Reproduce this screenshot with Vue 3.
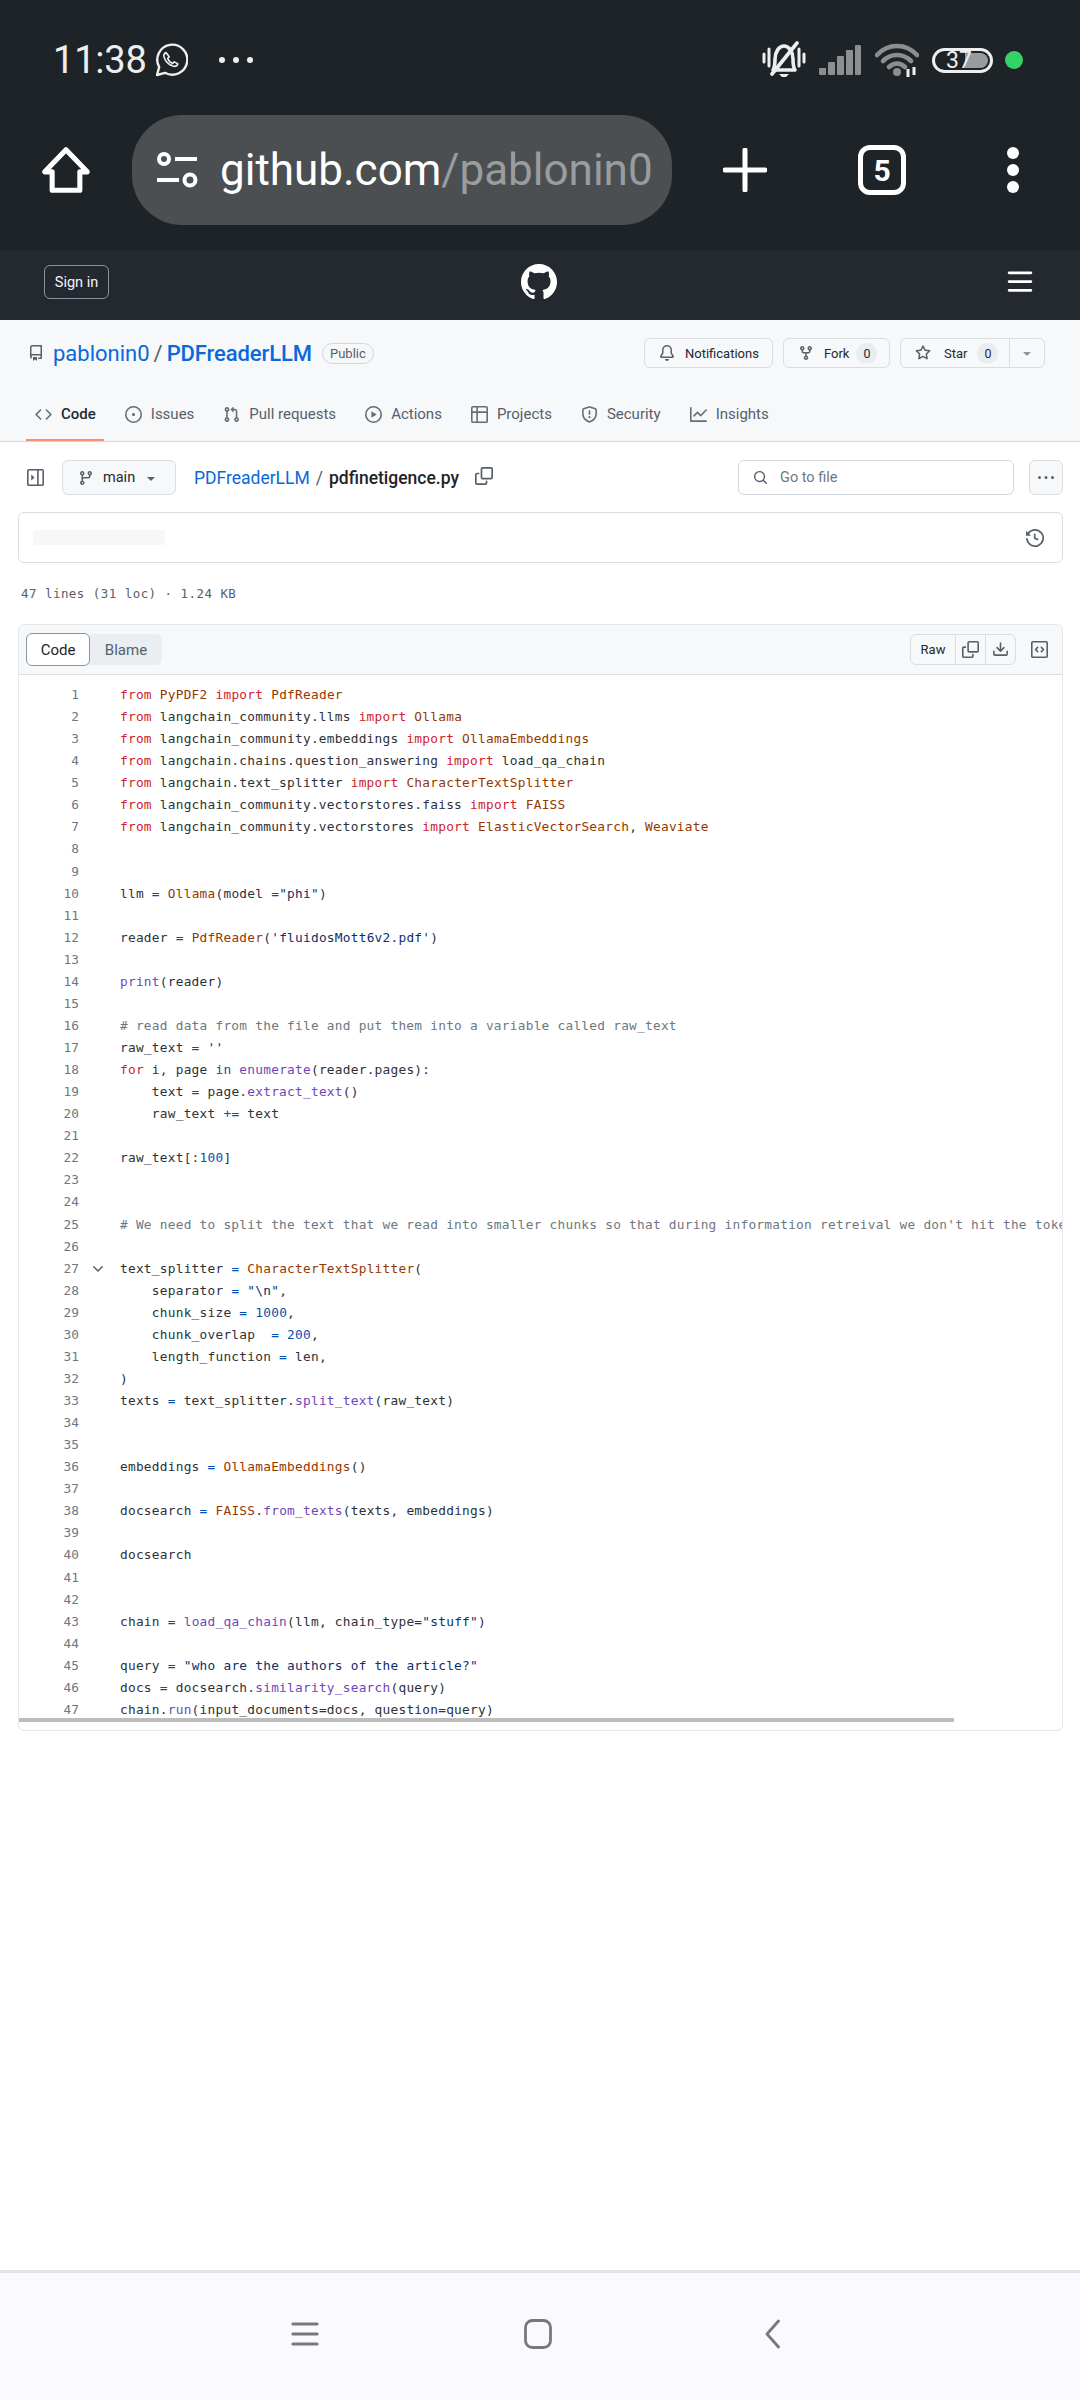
<script setup>
import { h } from 'vue'

const icons = {
  repo: 'M2 2.5A2.5 2.5 0 0 1 4.5 0h8.75a.75.75 0 0 1 .75.75v12.5a.75.75 0 0 1-.75.75h-2.5a.75.75 0 0 1 0-1.5h1.75v-2h-8a1 1 0 0 0-.714 1.7.75.75 0 1 1-1.072 1.05A2.495 2.495 0 0 1 2 11.5Zm10.5-1h-8a1 1 0 0 0-1 1v6.708A2.486 2.486 0 0 1 4.5 9h8ZM5 12.25a.25.25 0 0 1 .25-.25h3.5a.25.25 0 0 1 .25.25v3.25a.25.25 0 0 1-.4.2l-1.45-1.087a.249.249 0 0 0-.3 0L5.4 15.7a.25.25 0 0 1-.4-.2Z',
  bell: 'M8 16a2 2 0 0 0 1.985-1.75c.017-.137-.097-.25-.235-.25h-3.5c-.138 0-.252.113-.235.25A2 2 0 0 0 8 16ZM3 5a5 5 0 0 1 10 0v2.947c0 .05.015.098.042.139l1.703 2.555A1.519 1.519 0 0 1 13.482 13H2.518a1.516 1.516 0 0 1-1.263-2.36l1.703-2.554A.255.255 0 0 0 3 7.947Zm5-3.5A3.5 3.5 0 0 0 4.5 5v2.947c0 .346-.102.683-.294.97l-1.703 2.556a.017.017 0 0 0-.003.01l.001.006c0 .002.002.004.004.006l.006.004.007.001h10.964l.007-.001.006-.004.004-.006.001-.007a.017.017 0 0 0-.003-.01l-1.703-2.554a1.745 1.745 0 0 1-.294-.97V5A3.5 3.5 0 0 0 8 1.5Z',
  fork: 'M5 5.372v.878c0 .414.336.75.75.75h4.5a.75.75 0 0 0 .75-.75v-.878a2.25 2.25 0 1 1 1.5 0v.878a2.25 2.25 0 0 1-2.25 2.25h-1.5v2.128a2.251 2.251 0 1 1-1.5 0V8.5h-1.5A2.25 2.25 0 0 1 3.5 6.25v-.878a2.25 2.25 0 1 1 1.5 0ZM5 3.25a.75.75 0 1 0-1.5 0 .75.75 0 0 0 1.5 0Zm6.75.75a.75.75 0 1 0 0-1.5.75.75 0 0 0 0 1.5Zm-3 8.75a.75.75 0 1 0-1.5 0 .75.75 0 0 0 1.5 0Z',
  star: 'M8 .25a.75.75 0 0 1 .673.418l1.882 3.815 4.21.612a.75.75 0 0 1 .416 1.279l-3.046 2.97.719 4.192a.751.751 0 0 1-1.088.791L8 12.347l-3.766 1.98a.75.75 0 0 1-1.088-.79l.72-4.194L.818 6.374a.75.75 0 0 1 .416-1.28l4.21-.611L7.327.668A.75.75 0 0 1 8 .25Zm0 2.445L6.615 5.5a.75.75 0 0 1-.564.41l-3.097.45 2.24 2.184a.75.75 0 0 1 .216.664l-.528 3.084 2.769-1.456a.75.75 0 0 1 .698 0l2.77 1.456-.53-3.084a.75.75 0 0 1 .216-.664l2.24-2.183-3.096-.45a.75.75 0 0 1-.564-.41L8 2.694Z',
  code: 'm11.28 3.22 4.25 4.25a.75.75 0 0 1 0 1.06l-4.25 4.25a.749.749 0 0 1-1.275-.326.749.749 0 0 1 .215-.734L13.94 8l-3.72-3.72a.749.749 0 0 1 .326-1.275.749.749 0 0 1 .734.215Zm-6.56 0a.751.751 0 0 1 1.042.018.751.751 0 0 1 .018 1.042L2.06 8l3.72 3.72a.749.749 0 0 1-.326 1.275.749.749 0 0 1-.734-.215L.47 8.53a.75.75 0 0 1 0-1.06Z',
  issue: 'M8 9.5a1.5 1.5 0 1 0 0-3 1.5 1.5 0 0 0 0 3ZM8 0a8 8 0 1 1 0 16A8 8 0 0 1 8 0ZM1.5 8a6.5 6.5 0 1 0 13 0 6.5 6.5 0 0 0-13 0Z',
  pr: 'M1.5 3.25a2.25 2.25 0 1 1 3 2.122v5.256a2.251 2.251 0 1 1-1.5 0V5.372A2.25 2.25 0 0 1 1.5 3.25Zm5.677-.177L9.573.677A.25.25 0 0 1 10 .854V2.5h1A2.5 2.5 0 0 1 13.5 5v5.628a2.251 2.251 0 1 1-1.5 0V5a1 1 0 0 0-1-1h-1v1.646a.25.25 0 0 1-.427.177L7.177 3.427a.25.25 0 0 1 0-.354ZM3.75 2.5a.75.75 0 1 0 0 1.5.75.75 0 0 0 0-1.5Zm0 9.5a.75.75 0 1 0 0 1.5.75.75 0 0 0 0-1.5Zm8.25.75a.75.75 0 1 0 1.5 0 .75.75 0 0 0-1.5 0Z',
  play: 'M8 0a8 8 0 1 1 0 16A8 8 0 0 1 8 0ZM1.5 8a6.5 6.5 0 1 0 13 0 6.5 6.5 0 0 0-13 0Zm4.879-2.773 4.264 2.559a.25.25 0 0 1 0 .428l-4.264 2.559A.25.25 0 0 1 6 10.559V5.442a.25.25 0 0 1 .379-.215Z',
  table: 'M0 1.75C0 .784.784 0 1.75 0h12.5C15.216 0 16 .784 16 1.75v12.5A1.75 1.75 0 0 1 14.25 16H1.75A1.75 1.75 0 0 1 0 14.25ZM6.5 6.5v8h7.75a.25.25 0 0 0 .25-.25V6.5Zm8-1.5V1.75a.25.25 0 0 0-.25-.25H6.5V5Zm-13 1.5v7.75c0 .138.112.25.25.25H5v-8ZM5 5V1.5H1.75a.25.25 0 0 0-.25.25V5Z',
  shield: 'M7.467.133a1.748 1.748 0 0 1 1.066 0l5.25 1.68A1.75 1.75 0 0 1 15 3.48V7c0 1.566-.32 3.182-1.303 4.682-.983 1.498-2.585 2.813-5.032 3.855a1.697 1.697 0 0 1-1.33 0c-2.447-1.042-4.049-2.357-5.032-3.855C1.32 10.182 1 8.566 1 7V3.48a1.75 1.75 0 0 1 1.217-1.667Zm.61 1.429a.25.25 0 0 0-.153 0l-5.25 1.68a.25.25 0 0 0-.174.238V7c0 1.358.275 2.666 1.057 3.86.784 1.194 2.121 2.34 4.366 3.297a.196.196 0 0 0 .154 0c2.245-.956 3.582-2.104 4.366-3.298C13.225 9.666 13.5 8.36 13.5 7V3.48a.251.251 0 0 0-.174-.237l-5.25-1.68ZM8.75 4.75v3a.75.75 0 0 1-1.5 0v-3a.75.75 0 0 1 1.5 0ZM9 10.5a1 1 0 1 1-2 0 1 1 0 0 1 2 0Z',
  graph: 'M1.5 1.75V13.5h13.75a.75.75 0 0 1 0 1.5H.75a.75.75 0 0 1-.75-.75V1.75a.75.75 0 0 1 1.5 0Zm14.28 2.53-5.25 5.25a.75.75 0 0 1-1.06 0L7 7.06 4.28 9.78a.751.751 0 0 1-1.042-.018.751.751 0 0 1-.018-1.042l3.25-3.25a.75.75 0 0 1 1.06 0L10 7.94l4.72-4.72a.751.751 0 0 1 1.042.018.751.751 0 0 1 .018 1.042Z',
  branch: 'M9.5 3.25a2.25 2.25 0 1 1 3 2.122V6A2.5 2.5 0 0 1 10 8.5H6a1 1 0 0 0-1 1v1.128a2.251 2.251 0 1 1-1.5 0V5.372a2.25 2.25 0 1 1 1.5 0v1.836A2.493 2.493 0 0 1 6 7h4a1 1 0 0 0 1-1v-.628A2.25 2.25 0 0 1 9.5 3.25Zm-6 0a.75.75 0 1 0 1.5 0 .75.75 0 0 0-1.5 0Zm8.25-.75a.75.75 0 1 0 0 1.5.75.75 0 0 0 0-1.5ZM4.25 12a.75.75 0 1 0 0 1.5.75.75 0 0 0 0-1.5Z',
  sidebar: 'M6.823 7.823a.25.25 0 0 1 0 .354l-2.396 2.396A.25.25 0 0 1 4 10.396V5.604a.25.25 0 0 1 .427-.177ZM1.75 0h12.5C15.216 0 16 .784 16 1.75v12.5A1.75 1.75 0 0 1 14.25 16H1.75A1.75 1.75 0 0 1 0 14.25V1.75C0 .784.784 0 1.75 0ZM1.5 1.75v12.5c0 .138.112.25.25.25H9.5v-13H1.75a.25.25 0 0 0-.25.25ZM11 14.5h3.25a.25.25 0 0 0 .25-.25V1.75a.25.25 0 0 0-.25-.25H11Z',
  copy: 'M0 6.75C0 5.784.784 5 1.75 5h1.5a.75.75 0 0 1 0 1.5h-1.5a.25.25 0 0 0-.25.25v7.5c0 .138.112.25.25.25h7.5a.25.25 0 0 0 .25-.25v-1.5a.75.75 0 0 1 1.5 0v1.5A1.75 1.75 0 0 1 9.25 16h-7.5A1.75 1.75 0 0 1 0 14.25ZM5 1.75C5 .784 5.784 0 6.75 0h7.5C15.216 0 16 .784 16 1.75v7.5A1.75 1.75 0 0 1 14.25 11h-7.5A1.75 1.75 0 0 1 5 9.25Zm1.75-.25a.25.25 0 0 0-.25.25v7.5c0 .138.112.25.25.25h7.5a.25.25 0 0 0 .25-.25v-7.5a.25.25 0 0 0-.25-.25Z',
  search: 'M10.68 11.74a6 6 0 0 1-7.922-8.982 6 6 0 0 1 8.982 7.922l3.04 3.04a.749.749 0 0 1-.326 1.275.749.749 0 0 1-.734-.215ZM11.5 7a4.499 4.499 0 1 0-8.997 0A4.499 4.499 0 0 0 11.5 7Z',
  kebab: 'M8 9a1.5 1.5 0 1 0 0-3 1.5 1.5 0 0 0 0 3ZM1.5 9a1.5 1.5 0 1 0 0-3 1.5 1.5 0 0 0 0 3Zm13 0a1.5 1.5 0 1 0 0-3 1.5 1.5 0 0 0 0 3Z',
  history: 'm.427 1.927 1.215 1.215a8.002 8.002 0 1 1-1.6 5.685.75.75 0 1 1 1.493-.154 6.5 6.5 0 1 0 1.18-4.458l1.358 1.358A.25.25 0 0 1 3.896 6H.25A.25.25 0 0 1 0 5.75V2.104a.25.25 0 0 1 .427-.177ZM7.75 4a.75.75 0 0 1 .75.75v2.992l2.028.812a.75.75 0 0 1-.557 1.392l-2.5-1A.751.751 0 0 1 7 8.25v-3.5A.75.75 0 0 1 7.75 4Z',
  download: 'M2.75 14A1.75 1.75 0 0 1 1 12.25v-2.5a.75.75 0 0 1 1.5 0v2.5c0 .138.112.25.25.25h10.5a.25.25 0 0 0 .25-.25v-2.5a.75.75 0 0 1 1.5 0v2.5A1.75 1.75 0 0 1 13.25 14ZM7.25 7.689V2a.75.75 0 0 1 1.5 0v5.689l1.97-1.969a.749.749 0 1 1 1.06 1.06l-3.25 3.25a.749.749 0 0 1-1.06 0L4.22 6.78a.749.749 0 1 1 1.06-1.06l1.97 1.969Z',
  symbols: 'M0 1.75C0 .784.784 0 1.75 0h12.5C15.216 0 16 .784 16 1.75v12.5A1.75 1.75 0 0 1 14.25 16H1.75A1.75 1.75 0 0 1 0 14.25Zm1.75-.25a.25.25 0 0 0-.25.25v12.5c0 .138.112.25.25.25h12.5a.25.25 0 0 0 .25-.25V1.75a.25.25 0 0 0-.25-.25Zm7.47 3.97a.75.75 0 0 1 1.06 0l2 2a.75.75 0 0 1 0 1.06l-2 2a.749.749 0 0 1-1.275-.326.749.749 0 0 1 .215-.734L10.69 8 9.22 6.53a.75.75 0 0 1 0-1.06ZM6.78 6.53 5.31 8l1.47 1.47a.749.749 0 0 1-.326 1.275.749.749 0 0 1-.734-.215l-2-2a.75.75 0 0 1 0-1.06l2-2a.751.751 0 0 1 1.042.018.751.751 0 0 1 .018 1.042Z',
  github: 'M8 0c4.42 0 8 3.58 8 8a8.013 8.013 0 0 1-5.45 7.59c-.4.08-.55-.17-.55-.38 0-.27.01-1.13.01-2.2 0-.75-.25-1.23-.54-1.48 1.78-.2 3.65-.88 3.65-3.95 0-.88-.31-1.59-.82-2.15.08-.2.36-1.02-.08-2.12 0 0-.67-.22-2.2.82-.64-.18-1.32-.27-2-.27-.68 0-1.36.09-2 .27-1.53-1.03-2.2-.82-2.2-.82-.44 1.1-.16 1.92-.08 2.12-.51.56-.82 1.28-.82 2.15 0 3.06 1.86 3.75 3.64 3.95-.23.2-.44.55-.51 1.07-.46.21-1.61.55-2.33-.66-.15-.24-.6-.83-1.23-.82-.67.01-.27.38.01.53.34.19.73.9.82 1.13.16.45.68 1.31 2.69.94 0 .67.01 1.3.01 1.49 0 .21-.15.45-.55.38A7.995 7.995 0 0 1 0 8c0-4.42 3.58-8 8-8Z',
  chevron: 'M12.78 5.22a.749.749 0 0 1 0 1.06l-4.25 4.25a.749.749 0 0 1-1.06 0L3.22 6.28a.749.749 0 1 1 1.06-1.06L8 8.939l3.72-3.719a.749.749 0 0 1 1.06 0Z',
  caret: 'm4.427 7.427 3.396 3.396a.25.25 0 0 0 .354 0l3.396-3.396A.25.25 0 0 0 11.396 7H4.604a.25.25 0 0 0-.177.427Z',
  bars: 'M1 2.75A.75.75 0 0 1 1.75 2h12.5a.75.75 0 0 1 0 1.5H1.75A.75.75 0 0 1 1 2.75Zm0 5A.75.75 0 0 1 1.75 7h12.5a.75.75 0 0 1 0 1.5H1.75A.75.75 0 0 1 1 7.75ZM1.75 12h12.5a.75.75 0 0 1 0 1.5H1.75a.75.75 0 0 1 0-1.5Z'
}

const Oi = (props) =>
  h('svg', { viewBox: '0 0 16 16', fill: 'currentColor', 'aria-hidden': 'true' }, [h('path', { d: icons[props.n] })])
Oi.props = ['n']

const tabs = [
  { n: 'code', t: 'Code', active: true },
  { n: 'issue', t: 'Issues' },
  { n: 'pr', t: 'Pull requests' },
  { n: 'play', t: 'Actions' },
  { n: 'table', t: 'Projects' },
  { n: 'shield', t: 'Security' },
  { n: 'graph', t: 'Insights' }
]

// markup: {k|text} is a token of class k; everything else is plain
const src = [
  '{k|from} {e|PyPDF2} {k|import} {e|PdfReader}',
  '{k|from} langchain_community.llms {k|import} {e|Ollama}',
  '{k|from} langchain_community.embeddings {k|import} {e|OllamaEmbeddings}',
  '{k|from} langchain.chains.question_answering {k|import} load_qa_chain',
  '{k|from} langchain.text_splitter {k|import} {e|CharacterTextSplitter}',
  '{k|from} langchain_community.vectorstores.faiss {k|import} {e|FAISS}',
  '{k|from} langchain_community.vectorstores {k|import} {e|ElasticVectorSearch}, {e|Weaviate}',
  '',
  '',
  'llm {n|=} {e|Ollama}(model {n|=}{s|"phi"})',
  '',
  'reader {n|=} {e|PdfReader}({s|\'fluidosMott6v2.pdf\'})',
  '',
  '{f|print}(reader)',
  '',
  '{c|# read data from the file and put them into a variable called raw_text}',
  'raw_text {n|=} {s|\'\'}',
  '{k|for} i, page {n|in} {f|enumerate}(reader.pages):',
  '    text {n|=} page.{f|extract_text}()',
  '    raw_text {n|+=} text',
  '',
  'raw_text[:{n|100}]',
  '',
  '',
  '{c|# We need to split the text that we read into smaller chunks so that during information retreival we don\'t hit the token size limits.}',
  '',
  'text_splitter {n|=} {e|CharacterTextSplitter}(',
  '    separator {n|=} {s|"\\n"},',
  '    chunk_size {n|=} {n|1000},',
  '    chunk_overlap  {n|=} {n|200},',
  '    length_function {n|=} len,',
  ')',
  'texts {n|=} text_splitter.{f|split_text}(raw_text)',
  '',
  '',
  'embeddings {n|=} {e|OllamaEmbeddings}()',
  '',
  'docsearch {n|=} {e|FAISS}.{f|from_texts}(texts, embeddings)',
  '',
  'docsearch',
  '',
  '',
  'chain {n|=} {f|load_qa_chain}(llm, chain_type={s|"stuff"})',
  '',
  'query {n|=} {s|"who are the authors of the article?"}',
  'docs {n|=} docsearch.{f|similarity_search}(query)',
  'chain.{f|run}(input_documents=docs, question=query)'
]

const lines = src.map((line, i) => {
  const parts = []
  const re = /\{(\w)\|((?:[^}])*)\}/g
  let last = 0
  let m
  while ((m = re.exec(line))) {
    if (m.index > last) parts.push({ k: '', t: line.slice(last, m.index) })
    parts.push({ k: 't-' + m[1], t: m[2] })
    last = re.lastIndex
  }
  if (last < line.length) parts.push({ k: '', t: line.slice(last) })
  return { no: i + 1, parts }
})
</script>

<template>
  <div class="phone">
    <div class="chrome">
      <div class="status">
        <span class="time">11:38</span>
        <svg class="wa" viewBox="0 0 34 34" fill="none" stroke="#eee" stroke-width="2.4" stroke-linejoin="round" stroke-linecap="round">
          <path d="M3 32l2.2-8A15 15 0 1 1 11 29.8Z" />
          <path d="M12 9.5c-2 1-2.5 3-1.7 5.2 1.3 3.700 4.600 7 8.600 8.400 2.400.7 4.200-.2 5-2.200l-3.600-2-1.600 1.500c-2.200-.8-4.200-2.800-5-5l1.500-1.700Z" stroke-width="1.600" />
        </svg>
        <span class="dots"><i></i><i></i><i></i></span>
        <svg class="sys-bell" viewBox="0 0 44 38" fill="none" stroke="#eee" stroke-linecap="round">
          <path d="M2 13v8M7 8v17M37 8v17M42 13v8" stroke-width="3" />
          <path d="M11 29c2-3 2-6 2-11 0-7 4-13 9-13s9 6 9 13c0 5 0 8 2 11Z" stroke-width="3.600" stroke-linejoin="round" />
          <path d="M35 2L10 33" stroke-width="3.600" />
          <path d="M17 33h10l-3 3h-4Z" fill="#eee" stroke="none" />
        </svg>
        <svg class="sys-signal" viewBox="0 0 42 30" fill="#8c8e90">
          <rect x="0" y="23" width="7" height="7" rx="1" />
          <rect x="9" y="17" width="7" height="13" rx="1" />
          <rect x="18" y="11" width="7" height="19" rx="1" />
          <rect x="27" y="5" width="7" height="25" rx="1" />
          <rect x="36" y="0" width="6" height="30" rx="1" />
        </svg>
        <svg class="sys-wifi" viewBox="0 0 44 34" fill="none" stroke="#8c8e90" stroke-width="4.600" stroke-linecap="round">
          <path d="M2 12C13 0 31 0 42 12" />
          <path d="M8 18c8-8 20-8 28 0" />
          <path d="M14 24c5-4.500 11-4.500 16 0" />
          <circle cx="22" cy="29" r="4" fill="#8c8e90" stroke="none" />
          <path d="M33 26v8M39 24v8" stroke="#eee" stroke-width="3" stroke-linecap="butt" />
        </svg>
        <div class="battery"><span class="fill"></span><span class="pct">37</span></div>
        <span class="green"></span>
      </div>
      <div class="browser">
        <svg class="home" viewBox="0 0 52 52" fill="none" stroke="#fff" stroke-width="5.500" stroke-linejoin="round">
          <path d="M26 4L3 28h8v20h30V28h8Z" />
        </svg>
        <div class="pill">
          <svg class="tune" viewBox="0 0 44 36" fill="none" stroke="#fff" stroke-width="4">
            <circle cx="9" cy="7" r="5" />
            <path d="M20 7h22M2 28h22" />
            <circle cx="35" cy="28" r="5.500" />
          </svg>
          <span class="host">github.com</span><span class="path">/pablonin0</span>
        </div>
        <svg class="plus" viewBox="0 0 44 44" stroke="#fff" stroke-width="5" stroke-linecap="round">
          <path d="M22 2v40M2 22h40" />
        </svg>
        <div class="tabcount">5</div>
        <svg class="more" viewBox="0 0 12 46" fill="#fff">
          <circle cx="6" cy="6" r="6" />
          <circle cx="6" cy="23" r="6" />
          <circle cx="6" cy="40" r="6" />
        </svg>
      </div>
    </div>

    <header class="ghnav">
      <span class="signin">Sign in</span>
      <Oi n="github" class="octo" />
      <Oi n="bars" class="burger" />
    </header>

    <section class="repohead">
      <div class="titlerow">
        <Oi n="repo" class="i-repo" />
        <a class="owner">pablonin0</a>
        <span class="slash">/</span>
        <a class="name">PDFreaderLLM</a>
        <span class="public">Public</span>
        <div class="actions">
          <span class="btn b-notif"><Oi n="bell" class="i14" />Notifications</span>
          <span class="btn b-fork"><Oi n="fork" class="i14" />Fork<span class="cnt">0</span></span>
          <span class="btn b-star">
            <span class="star-main"><Oi n="star" class="i16" />Star<span class="cnt">0</span></span>
            <span class="star-drop"><Oi n="caret" class="i14 muted" /></span>
          </span>
        </div>
      </div>
      <nav class="tabs">
        <span v-for="t in tabs" :key="t.t" class="tab" :class="{ active: t.active }">
          <Oi :n="t.n" class="tabicon" />{{ t.t }}
        </span>
      </nav>
    </section>

    <main class="content">
      <div class="pathrow">
        <Oi n="sidebar" class="i-side" />
        <span class="branch">
          <Oi n="branch" class="i-branch" />main<Oi n="caret" class="i-caret" />
        </span>
        <a class="crumb">PDFreaderLLM</a>
        <span class="crumbsep">/</span>
        <strong class="file">pdfinetigence.py</strong>
        <Oi n="copy" class="i-copy" />
        <span class="gofile"><Oi n="search" class="i-search" />Go to file</span>
        <span class="morebtn"><Oi n="kebab" class="i-kebab" /></span>
      </div>

      <div class="commit">
        <span class="skeleton"></span>
        <Oi n="history" class="i-hist" />
      </div>

      <div class="meta">47 lines (31 loc) · 1.24 KB</div>

      <div class="filebox">
        <div class="filehead">
          <div class="seg">
            <span class="seg-on">Code</span>
            <span class="seg-off">Blame</span>
          </div>
          <div class="tools">
            <span class="tool raw">Raw</span>
            <span class="tool"><Oi n="copy" class="i-tool" /></span>
            <span class="tool"><Oi n="download" class="i-tool" /></span>
          </div>
          <Oi n="symbols" class="i-sym" />
        </div>
        <div class="code">
          <div v-for="l in lines" :key="l.no" class="line">
            <span class="no">{{ l.no }}</span>
            <span class="fold"><Oi v-if="l.no === 27" n="chevron" class="i-fold" /></span>
            <span class="src"><span v-for="(p, i) in l.parts" :key="i" :class="p.k">{{ p.t }}</span></span>
          </div>
          <div class="scrollbar"></div>
        </div>
      </div>
    </main>

    <footer class="sysnav">
      <svg class="nav-menu" viewBox="0 0 28 24" stroke="#77787e" stroke-width="3.200" stroke-linecap="round">
        <path d="M2 2h24M2 12h24M2 22h24" />
      </svg>
      <svg class="nav-home" viewBox="0 0 28 30" fill="none" stroke="#77787e" stroke-width="2.800">
        <rect x="1.500" y="1.500" width="25" height="27" rx="7" />
      </svg>
      <svg class="nav-back" viewBox="0 0 15 30" fill="none" stroke="#77787e" stroke-width="2.800" stroke-linecap="round" stroke-linejoin="round">
        <path d="M13.500 2L2 15l11.500 13" />
      </svg>
    </footer>
  </div>
</template>

<style>
html, body { margin: 0; background: #fff; }
</style>

<style scoped>
* { box-sizing: border-box; }
.phone {
  width: 1080px;
  height: 2400px;
  display: flex;
  flex-direction: column;
  font-family: Roboto, "Liberation Sans", sans-serif;
  color: #24292f;
  background: #fff;
  overflow: hidden;
}
.chrome { height: 250px; background: #1e2327; color: #fff; flex: none; }
.status { height: 115px; display: flex; align-items: center; padding: 5px 0 0 53px; }
.time { font-size: 38px; color: #eee; width: 95px; letter-spacing: -0.2px; }
.wa { width: 34px; height: 34px; margin-left: 6px; }
.dots { display: flex; gap: 8px; margin-left: 31px; width: 36px; }
.dots i { width: 6px; height: 6px; border-radius: 50%; background: #eee; }
.sys-bell { width: 44px; height: 38px; margin-left: 507px; }
.sys-signal { width: 42px; height: 30px; margin-left: 13px; }
.sys-wifi { width: 44px; height: 34px; margin-left: 14px; }
.battery {
  position: relative;
  width: 61px;
  height: 25px;
  margin-left: 13px;
  border: 3px solid #eee;
  border-radius: 13px;
}
.fill { position: absolute; left: 30px; right: 2px; top: 2px; bottom: 2px; background: #9a9b9c; border-radius: 0 8px 8px 0; }
.pct { position: absolute; left: 11px; top: 0; font-size: 23px; line-height: 19px; color: #eee; }
.green { width: 18px; height: 18px; border-radius: 50%; background: #34d367; margin-left: 12px; }

.browser { height: 110px; display: flex; align-items: center; padding-left: 42px; }
.home { width: 48px; height: 48px; flex: none; }
.pill {
  width: 540px;
  height: 110px;
  margin-left: 42px;
  border-radius: 50px;
  background: #4c4f52;
  display: flex;
  align-items: center;
  padding-left: 23px;
  font-size: 44px;
  flex: none;
  white-space: nowrap;
}
.tune { width: 44px; height: 36px; margin-right: 21px; flex: none; }
.host { color: #fff; }
.path { color: #9a9c9e; }
.plus { width: 44px; height: 44px; margin-left: 51px; flex: none; }
.tabcount {
  width: 48px;
  height: 50px;
  margin-left: 91px;
  border: 5px solid #fff;
  border-radius: 12px;
  display: flex;
  align-items: center;
  justify-content: center;
  font-size: 30px;
  font-weight: 700;
  flex: none;
}
.more { width: 12px; height: 46px; margin-left: 101px; flex: none; }

.ghnav {
  height: 70px;
  flex: none;
  background: #24292f;
  display: grid;
  grid-template-columns: 1fr auto 1fr;
  align-items: center;
  padding: 0 46px 6px 44px;
}
.signin {
  width: 65px;
  height: 34px;
  border: 1px solid #8b949e;
  border-radius: 6px;
  color: #f0f6fc;
  font-size: 14.500px;
  display: flex;
  align-items: center;
  justify-content: center;
}
.octo { width: 36px; height: 36px; color: #fff; }
.burger { width: 28px; height: 28px; color: #fff; justify-self: end; }

.repohead {
  flex: none;
  height: 122px;
  background: #f6f8fa;
  border-bottom: 1px solid #d0d7de;
}
.titlerow { height: 73px; display: flex; align-items: center; padding: 18px 35px 25px 28px; }
.i-repo { width: 16px; height: 16px; color: #57606a; margin-right: 9px; }
.owner { font-size: 22px; color: #0969da; }
.slash { font-size: 22px; color: #57606a; margin: 0 4px; }
.name { font-size: 22px; font-weight: 500; color: #0969da; letter-spacing: -0.1px; }
.public {
  margin-left: 10px;
  width: 52px;
  height: 21px;
  border: 1px solid #d0d7de;
  border-radius: 11px;
  color: #57606a;
  font-size: 13px;
  display: flex;
  align-items: center;
  justify-content: center;
}
.actions { margin-left: auto; display: flex; gap: 10px; }
.btn {
  height: 30px;
  display: flex;
  align-items: center;
  border: 1px solid #d8dee4;
  border-radius: 6px;
  font-size: 13px;
  color: #24292f;
  background: #f6f8fa;
}
.i14 { width: 16px; height: 16px; color: #57606a; flex: none; }
.i16 { width: 16px; height: 16px; color: #57606a; flex: none; }
.muted { color: #8c959f; }
.b-notif { width: 129px; padding-left: 14px; gap: 10px; }
.b-fork { width: 107px; padding-left: 14px; gap: 10px; }
.b-star { width: 145px; }
.star-main { width: 109px; height: 100%; display: flex; align-items: center; padding-left: 14px; gap: 13px; border-right: 1px solid #d8dee4; }
.star-drop { flex: 1; display: flex; justify-content: center; }
.cnt {
  width: 21px;
  height: 21px;
  margin-left: -3px;
  border-radius: 11px;
  background: #e9edf1;
  font-size: 12.500px;
  display: flex;
  align-items: center;
  justify-content: center;
}
.tabs { height: 48px; display: flex; padding-left: 26px; gap: 12px; }
.tab {
  position: relative;
  display: flex;
  align-items: center;
  gap: 9px;
  padding: 0 8px 4px 9px;
  font-size: 15px;
  color: #57606a;
  white-space: nowrap;
  height: 48px;
  border-bottom: 2px solid transparent;
}
.tab.active { color: #24292f; font-weight: 500; border-bottom-color: #fd8c73; }
.tabicon { width: 17px; height: 17px; color: #656d76; flex: none; }

.content { flex: 1; padding: 0 17px 0 18px; }
.pathrow { height: 70px; display: flex; align-items: center; padding-top: 1px; }
.i-side { width: 17px; height: 17px; margin-left: 9px; color: #57606a; flex: none; }
.branch {
  margin-left: 18px;
  width: 114px;
  height: 35px;
  border: 1px solid #d8dee4;
  border-radius: 6px;
  background: #f6f8fa;
  display: flex;
  align-items: center;
  padding-left: 15px;
  font-size: 14.500px;
  flex: none;
}
.i-branch { width: 16px; height: 16px; margin-right: 9px; color: #57606a; }
.i-caret { width: 16px; height: 16px; margin-left: 8px; color: #57606a; }
.crumb { margin-left: 18px; font-size: 17.500px; font-weight: 400; color: #0969da; }
.crumbsep { margin: 0 6px; font-size: 17.500px; color: #57606a; }
.file { font-size: 17.500px; font-weight: 500; color: #1f2328; }
.i-copy { width: 18px; height: 18px; margin-left: 16px; margin-top: -3px; color: #57606a; flex: none; }
.gofile {
  margin-left: auto;
  width: 276px;
  height: 35px;
  border: 1px solid #d0d7de;
  border-radius: 6px;
  display: flex;
  align-items: center;
  padding-left: 14px;
  font-size: 14.500px;
  color: #6e7781;
  flex: none;
}
.i-search { width: 15px; height: 15px; margin-right: 12px; color: #57606a; }
.morebtn {
  margin-left: 15px;
  width: 34px;
  height: 35px;
  border: 1px solid #d8dee4;
  border-radius: 6px;
  background: #f6f8fa;
  display: flex;
  align-items: center;
  justify-content: center;
  flex: none;
}
.i-kebab { width: 16px; height: 16px; color: #57606a; }

.commit {
  height: 51px;
  border: 1px solid #d8dee4;
  border-radius: 6px;
  display: flex;
  align-items: center;
  justify-content: space-between;
  padding: 0 18px 0 14px;
}
.skeleton { width: 132px; height: 15px; background: #f6f7f8; border-radius: 3px; }
.i-hist { width: 18px; height: 18px; color: #57606a; }

.meta {
  height: 61px;
  padding: 0 0 0 3px;
  display: flex;
  align-items: center;
  font-family: "DejaVu Sans Mono", "Liberation Mono", monospace;
  font-size: 12.500px;
  letter-spacing: 0.45px;
  color: #57606a;
  white-space: pre;
}
.filebox {
  border: 1px solid #e4e8ec;
  border-radius: 6px;
  overflow: hidden;
}
.filehead {
  height: 50px;
  background: #f6f8fa;
  border-bottom: 1px solid #d8dee4;
  display: flex;
  align-items: center;
  padding: 0 14px 0 7px;
}
.seg { display: flex; align-items: center; background: #eaeef2; border-radius: 6px; height: 31px; }
.seg-on {
  width: 64px;
  height: 33px;
  background: #fff;
  border: 1px solid #8c959f;
  border-radius: 6px;
  font-size: 15px;
  font-weight: 400;
  color: #1f2328;
  display: flex;
  align-items: center;
  justify-content: center;
}
.seg-off { width: 72px; text-align: center; font-size: 15px; color: #57606a; }
.tools {
  margin-left: auto;
  display: flex;
  height: 31px;
  border: 1px solid #d8dee4;
  border-radius: 6px;
}
.tool {
  width: 30px;
  display: flex;
  align-items: center;
  justify-content: center;
  border-left: 1px solid #d8dee4;
  color: #57606a;
}
.tool.raw { width: 44px; border-left: none; font-size: 13px; font-weight: 400; color: #24292f; }
.i-tool { width: 17px; height: 17px; }
.i-sym { width: 17px; height: 17px; margin-left: 15px; color: #57606a; flex: none; }

.code {
  position: relative;
  padding: 9px 0 9px;
  font-family: "DejaVu Sans Mono", "Liberation Mono", monospace;
  font-size: 12.800px;
  letter-spacing: 0.25px;
  color: #2c3238;
}
.line { display: flex; height: 22.070px; line-height: 22.070px; white-space: pre; }
.no { width: 60px; text-align: right; color: #6e7781; flex: none; letter-spacing: 0; }
.fold { width: 41px; flex: none; display: flex; align-items: center; padding-left: 11px; }
.i-fold { width: 16px; height: 16px; color: #57606a; }
.src { flex: none; }
.t-k { color: #cf222e; }
.t-e { color: #953800; }
.t-f { color: #7048b8; }
.t-s { color: #0a3069; }
.t-n { color: #0550ae; }
.t-c { color: #6e7781; }
.scrollbar { position: absolute; left: 0; bottom: 8px; width: 935px; height: 4px; background: #bdbdbd; }

.sysnav {
  height: 130px;
  flex: none;
  background: #f9f9fe;
  border-top: 3px solid #e0e3ea;
  position: relative;
  display: flex;
  align-items: center;
  padding: 0 0 6px 291px;
}
.nav-menu { width: 28px; height: 24px; flex: none; }
.nav-home { width: 28px; height: 30px; margin-left: 205px; flex: none; }
.nav-back { width: 15px; height: 30px; margin-left: 213px; flex: none; }
</style>
